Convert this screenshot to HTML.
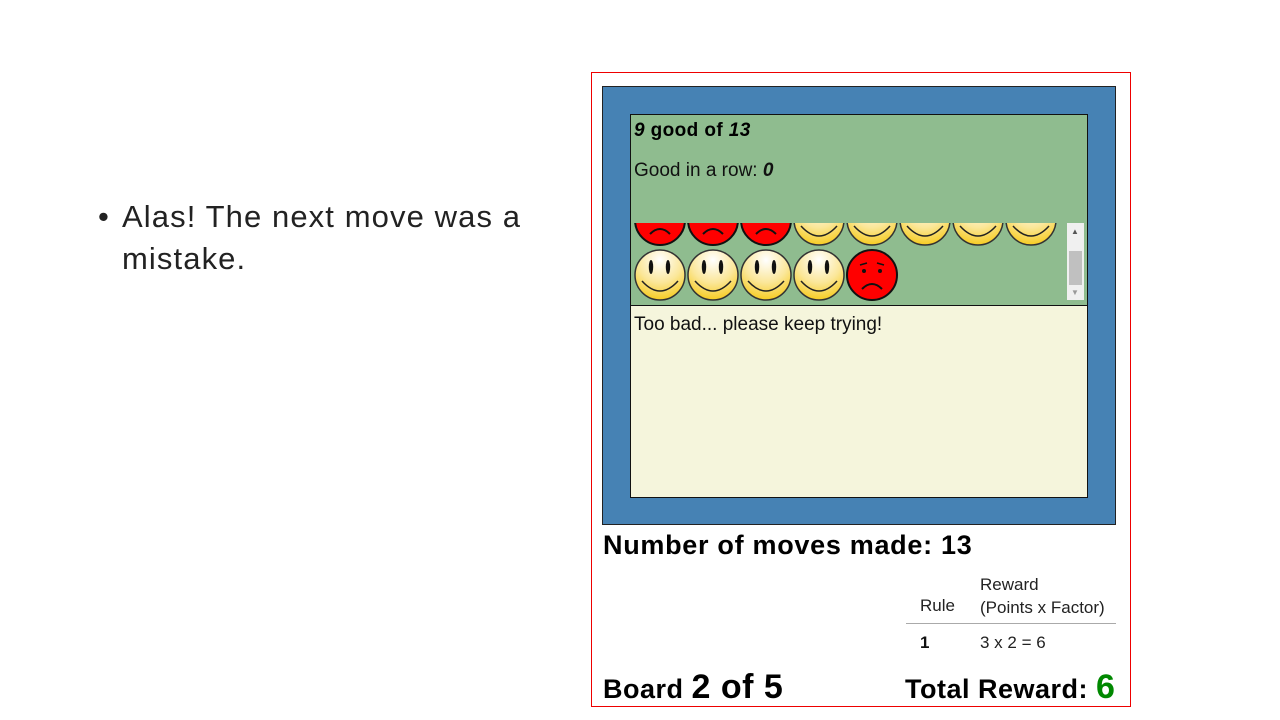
<!DOCTYPE html>
<html><head><meta charset="utf-8"><style>
body{margin:0;width:1280px;height:720px;background:#fff;position:relative;overflow:hidden;font-family:"Liberation Sans",sans-serif}
.a{position:absolute}
</style></head><body>
<div class="a" style="left:98px;top:196px;font-size:31px;color:#222;line-height:42px">•</div>
<div class="a" style="left:122px;top:196px;font-size:31px;color:#222;line-height:42px;width:430px;letter-spacing:1.1px">Alas! The next move was a mistake.</div>

<div class="a" style="left:591px;top:72px;width:538px;height:633px;border:1px solid #e00"></div>
<div class="a" style="left:602px;top:86px;width:512px;height:437px;background:#4682b4;border:1px solid #222"></div>
<div class="a" style="left:630px;top:114px;width:456px;height:190px;background:#8fbc8f;border:1px solid #111"></div>
<div class="a" style="left:634px;top:120px;font-size:19px;font-weight:bold;font-style:italic;color:#000;letter-spacing:0.4px">9 <span style="font-style:normal">good of</span> 13</div>
<div class="a" style="left:634px;top:160px;font-size:19px;color:#111">Good in a row: <b><i>0</i></b></div>

<svg class="a" style="left:631px;top:223px" width="436" height="80" viewBox="0 0 436 80">
<defs>
<radialGradient id="y" cx="0.5" cy="0.2" r="0.9"><stop offset="0" stop-color="#fff"/><stop offset="0.5" stop-color="#fbe79a"/><stop offset="1" stop-color="#f5c400"/></radialGradient>
<g id="s"><circle r="25" fill="url(#y)" stroke="#333" stroke-width="1.5"/><path d="M-18 6 Q0 26 18 6" fill="none" stroke="#222" stroke-width="1.5"/><ellipse cx="-9" cy="-8" rx="2.2" ry="7" fill="#111"/><ellipse cx="8" cy="-8" rx="2.2" ry="7" fill="#111"/></g>
<g id="f"><circle r="25" fill="#f00" stroke="#111" stroke-width="2"/><path d="M-10 14 Q0 4 10 14" fill="none" stroke="#111" stroke-width="2"/><circle cx="-8" cy="-4" r="2" fill="#111"/><circle cx="8" cy="-4" r="2" fill="#111"/><path d="M-12 -10 L-5 -12 M12 -10 L5 -12" stroke="#111" stroke-width="1.5"/></g>
</defs>
<use href="#f" x="29" y="-3"/><use href="#f" x="82" y="-3"/><use href="#f" x="135" y="-3"/>
<use href="#s" x="188" y="-3"/><use href="#s" x="241" y="-3"/><use href="#s" x="294" y="-3"/><use href="#s" x="347" y="-3"/><use href="#s" x="400" y="-3"/>
<use href="#s" x="29" y="52"/><use href="#s" x="82" y="52"/><use href="#s" x="135" y="52"/><use href="#s" x="188" y="52"/><use href="#f" x="241" y="52"/>
</svg>
<div class="a" style="left:1067px;top:223px;width:17px;height:77px;background:#f0f0f0"></div>
<div class="a" style="left:1069px;top:251px;width:13px;height:34px;background:#c0c0c0"></div>
<div class="a" style="left:1071px;top:227px;font-size:8px;color:#555">▲</div>
<div class="a" style="left:1071px;top:288px;font-size:8px;color:#999">▼</div>

<div class="a" style="left:630px;top:305px;width:456px;height:191px;background:#f5f5dc;border:1px solid #111"></div>
<div class="a" style="left:634px;top:314px;font-size:19px;color:#111">Too bad... please keep trying!</div>

<div class="a" style="left:603px;top:530px;font-size:27px;font-weight:bold;color:#000;letter-spacing:0.7px">Number of moves made: 13</div>
<div class="a" style="left:980px;top:573px;font-size:17px;color:#222;line-height:23px">Reward<br>(Points x Factor)</div>
<div class="a" style="left:920px;top:596px;font-size:17px;color:#222">Rule</div>
<div class="a" style="left:906px;top:623px;width:210px;height:1px;background:#aaa"></div>
<div class="a" style="left:920px;top:633px;font-size:17px;font-weight:bold;color:#111">1</div>
<div class="a" style="left:980px;top:633px;font-size:17px;color:#222">3 x 2 = 6</div>
<div class="a" style="left:603px;top:668px;font-size:27px;font-weight:bold;color:#000;letter-spacing:0.5px">Board <span style="font-size:34px">2 of 5</span></div>
<div class="a" style="left:905px;top:668px;font-size:27px;font-weight:bold;color:#000;letter-spacing:0.5px">Total Reward: <span style="font-size:34px;color:#080">6</span></div>
</body></html>
